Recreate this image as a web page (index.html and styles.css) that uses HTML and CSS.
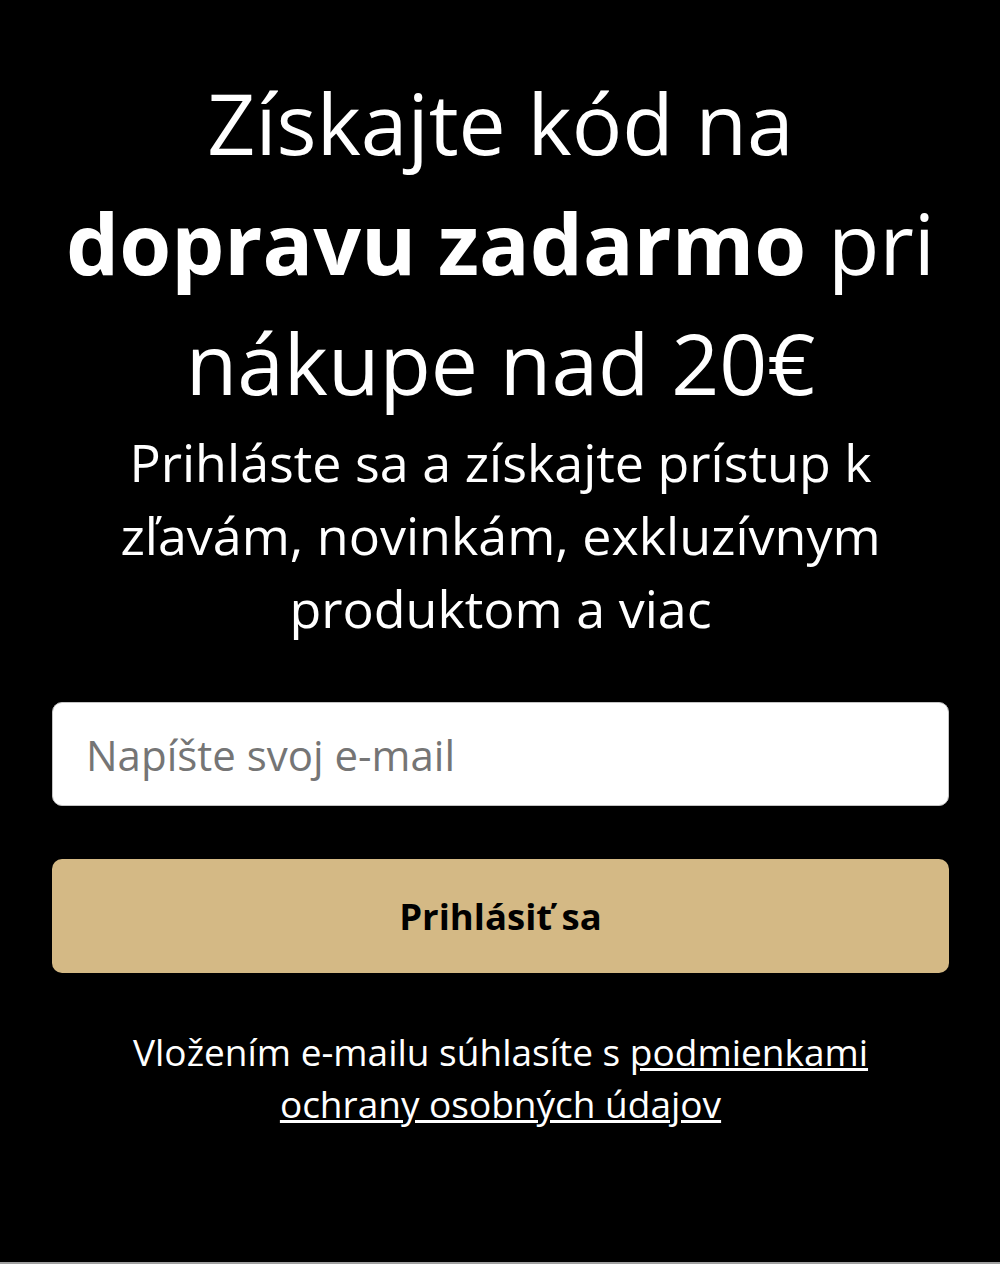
FILE: index.html
```html
<!DOCTYPE html>
<html lang="sk">
<head>
<meta charset="utf-8">
<title>Newsletter</title>
<link rel="stylesheet" href="styles.css">
</head>
<body>
<main class="signup">
  <h1 class="title">Získajte kód na <strong>dopravu zadarmo</strong> pri nákupe nad 20€</h1>
  <p class="lead">Prihláste sa a získajte prístup k zľavám, novinkám, exkluzívnym produktom a viac</p>
  <form class="form">
    <input class="email" type="email" placeholder="Napíšte svoj e-mail">
    <button class="submit" type="button">Prihlásiť sa</button>
  </form>
  <p class="note">Vložením e-mailu súhlasíte s <a href="#">podmienkami ochrany osobných údajov</a></p>
</main>
</body>
</html>
```

FILE: styles.css
```css
html, body {
  margin: 0;
  padding: 0;
  background: #000;
}
body {
  box-sizing: border-box;
  height: 1264px;
  border-bottom: 2px solid #a0a0a0;
  font-family: "Open Sans", "Noto Sans", sans-serif;
  color: #fff;
}
.signup {
  padding: 63px 51px 0 52px;
  display: flex;
  flex-direction: column;
  text-align: center;
}
.title {
  margin: 0 -10px;
  font-size: 84px;
  font-weight: 400;
  line-height: 120px;
}
.title strong {
  font-weight: 700;
}
.lead {
  margin: 2px -10px 0;
  font-size: 52px;
  line-height: 73px;
}
.form {
  margin-top: 58px;
  display: flex;
  flex-direction: column;
  gap: 53px;
}
.email {
  box-sizing: border-box;
  height: 104px;
  border: 1px solid #c4c4c4;
  border-radius: 10px;
  padding: 0 33px;
  font-family: inherit;
  font-size: 42px;
  color: #333;
  background: #fff;
}
.email::placeholder {
  color: #757575;
}
.submit {
  height: 114px;
  border: 0;
  border-radius: 10px;
  background: #d4b985;
  font-family: inherit;
  font-size: 36.5px;
  font-weight: 700;
  color: #000;
}
.note {
  margin: 53px 50px 0;
  font-size: 37px;
  line-height: 52px;
}
.note a {
  color: #fff;
}
```
